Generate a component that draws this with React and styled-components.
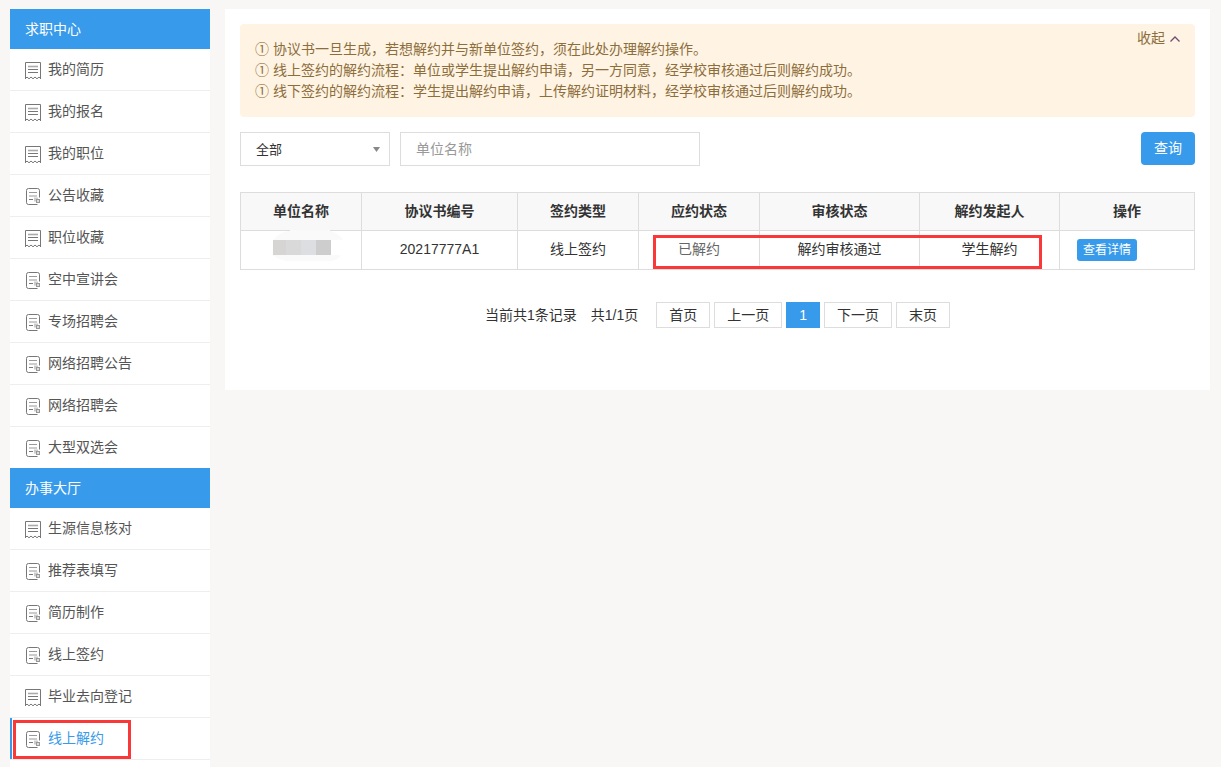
import React, { useState } from "react";
import styled, { createGlobalStyle } from "styled-components";

const jobMenu = [
  { label: "我的简历", icon: "receipt" },
  { label: "我的报名", icon: "receipt" },
  { label: "我的职位", icon: "receipt" },
  { label: "公告收藏", icon: "form" },
  { label: "职位收藏", icon: "receipt" },
  { label: "空中宣讲会", icon: "form" },
  { label: "专场招聘会", icon: "form" },
  { label: "网络招聘公告", icon: "form" },
  { label: "网络招聘会", icon: "form" },
  { label: "大型双选会", icon: "form" },
];

const serviceMenu = [
  { label: "生源信息核对", icon: "receipt" },
  { label: "推荐表填写", icon: "form" },
  { label: "简历制作", icon: "form" },
  { label: "线上签约", icon: "form" },
  { label: "毕业去向登记", icon: "receipt" },
  { label: "线上解约", icon: "form", active: true },
];

const notices = [
  "① 协议书一旦生成，若想解约并与新单位签约，须在此处办理解约操作。",
  "① 线上签约的解约流程：单位或学生提出解约申请，另一方同意，经学校审核通过后则解约成功。",
  "① 线下签约的解约流程：学生提出解约申请，上传解约证明材料，经学校审核通过后则解约成功。",
];

const columns = [
  { title: "单位名称", width: 121 },
  { title: "协议书编号", width: 156 },
  { title: "签约类型", width: 121 },
  { title: "应约状态", width: 121 },
  { title: "审核状态", width: 160 },
  { title: "解约发起人", width: 140 },
  { title: "操作", width: 135 },
];

const ReceiptIcon = () => (
  <Icon viewBox="0 0 16 18" aria-hidden="true">
    <path d="M.5 17V.5h15V17" stroke="#777" />
    <path
      d="M.5 16.500l1.500-1.500 2 1.800 2-1.800 2 1.800 2-1.800 2 1.800 2-1.800 1.500 1.500"
      stroke="#777"
    />
    <path d="M3 4.500h10" stroke="#aaa" strokeWidth="1.600" />
    <path d="M3 7.500h10M3 10.500h10" stroke="#777" />
  </Icon>
);

const FormIcon = () => (
  <Icon viewBox="0 0 16 18" aria-hidden="true">
    <path
      d="M14.500 9.500V2.500a2 2 0 0 0-2-2h-9a2 2 0 0 0-2 2v12a2 2 0 0 0 2 2h9"
      stroke="#777"
    />
    <path d="M4 4.500h8M4 8h8" stroke="#999" strokeWidth="1.200" />
    <path d="M4 11.500h4" stroke="#777" />
    <path d="M9 9.500h4v4H9z" fill="#ccc" />
    <rect x="11.500" y="11.500" width="3" height="3" fill="#ddd" stroke="#999" />
  </Icon>
);

const Menu = ({ title, items }) => (
  <nav aria-label={title}>
    <MenuTitle>{title}</MenuTitle>
    <MenuList>
      {items.map((item) => (
        <MenuItem key={item.label} $active={item.active}>
          <MenuLink href="#" $active={item.active}>
            {item.icon === "receipt" ? <ReceiptIcon /> : <FormIcon />}
            {item.label}
          </MenuLink>
          {item.active && <MenuMark />}
        </MenuItem>
      ))}
    </MenuList>
  </nav>
);

const App = () => {
  const [open, setOpen] = useState(true);

  return (
    <Page>
      <GlobalStyle />
      <Sidebar>
        <Menu title="求职中心" items={jobMenu} />
        <Menu title="办事大厅" items={serviceMenu} />
      </Sidebar>
      <Main>
        <Notice>
          <NoticeText>
            {notices.slice(0, open ? 3 : 1).map((text) => (
              <p key={text}>{text}</p>
            ))}
          </NoticeText>
          <Toggle type="button" onClick={() => setOpen(!open)}>
            收起
            <svg width="10" height="6" viewBox="0 0 10 6" aria-hidden="true">
              <path d="M.5 5.5L5 1l4.500 4.500" fill="none" stroke="#714c70" strokeWidth="1.300" />
            </svg>
          </Toggle>
        </Notice>
        <Filters onSubmit={(e) => e.preventDefault()}>
          <SelectBox>
            <Select aria-label="状态" defaultValue="all">
              <option value="all">全部</option>
            </Select>
            <Arrow viewBox="0 0 7 5" aria-hidden="true">
              <path d="M0 0h7L3.500 5z" fill="#888" />
            </Arrow>
          </SelectBox>
          <TextInput aria-label="单位名称" placeholder="单位名称" />
          <SearchButton type="submit">查询</SearchButton>
        </Filters>
        <TableBox>
          <Table>
            <colgroup>
              {columns.map((col) => (
                <Col key={col.title} $width={col.width} />
              ))}
            </colgroup>
            <thead>
              <tr>
                {columns.map((col) => (
                  <th key={col.title}>{col.title}</th>
                ))}
              </tr>
            </thead>
            <tbody>
              <tr>
                <td>
                  <Mosaic viewBox="0 0 70 32" aria-label="已隐藏">
                    <path d="M0 10Q8 1 17 1V0h40v1q9 2 13 9h-12v15h10q-4 6-12 6H18Q6 31 0 25z" fill="#fafafa" />
                    <path d="M0 10h13v15H0z" fill="#d6d5d4" />
                    <path d="M13 10h15v15H13z" fill="#dad9d9" />
                    <path d="M28 10h15v15H28z" fill="#dcdee1" />
                    <path d="M43 10h15v15H43z" fill="#cecdce" />
                  </Mosaic>
                </td>
                <td>20217777A1</td>
                <td>线上签约</td>
                <td>
                  <Muted>已解约</Muted>
                </td>
                <td>解约审核通过</td>
                <td>学生解约</td>
                <ActionCell>
                  <DetailButton type="button">查看详情</DetailButton>
                </ActionCell>
              </tr>
            </tbody>
          </Table>
          <RowMark />
        </TableBox>
        <Pager aria-label="分页">
          <Total>当前共1条记录</Total>
          <Pages>共1/1页</Pages>
          <PageLink href="#">首页</PageLink>
          <PageLink href="#">上一页</PageLink>
          <PageLink href="#" $current aria-current="page">
            1
          </PageLink>
          <PageLink href="#">下一页</PageLink>
          <PageLink href="#">末页</PageLink>
        </Pager>
      </Main>
    </Page>
  );
};

export default App;

const GlobalStyle = createGlobalStyle`
  * {
    box-sizing: border-box;
  }
  body {
    margin: 0;
    background: #f8f7f5;
    color: #333;
    font: 14px/21px "Liberation Sans", "Noto Sans CJK SC", sans-serif;
  }
  p, ul {
    margin: 0;
    padding: 0;
  }
  button, input, select {
    font: inherit;
  }
`;

const Page = styled.div`
  display: flex;
  gap: 15px;
  min-height: 100vh;
  padding: 9px 11px 0 10px;
`;

const Sidebar = styled.aside`
  flex: 0 0 200px;
  background: #fff;
`;

const MenuTitle = styled.h2`
  margin: 0;
  padding: 0 15px;
  background: #389aea;
  color: #fff;
  font-size: 14px;
  font-weight: 400;
  line-height: 40px;
`;

const MenuList = styled.ul`
  list-style: none;
`;

const MenuItem = styled.li`
  position: relative;
  border-bottom: 1px solid #eee;
  box-shadow: ${({ $active }) => ($active ? "inset 2px 0 #389aea" : "none")};

  nav:first-child &:last-child {
    border-bottom: 0;
  }
`;

const MenuLink = styled.a`
  display: flex;
  align-items: center;
  gap: 7px;
  height: 41px;
  padding: 0 15px;
  color: ${({ $active }) => ($active ? "#389aea" : "#555")};
  text-decoration: none;
`;

const Icon = styled.svg`
  width: 16px;
  height: 18px;
  margin-top: 3px;
  fill: none;
`;

const MenuMark = styled.span`
  position: absolute;
  top: 2px;
  bottom: 0;
  left: 3px;
  width: 118px;
  border: 3px solid #fb3838;
  pointer-events: none;
`;

const Main = styled.main`
  flex: 1;
  align-self: flex-start;
  min-width: 0;
  padding: 15px 15px 62px;
  background: #fff;
`;

const Notice = styled.section`
  display: flex;
  align-items: flex-start;
  justify-content: space-between;
  padding: 0 15px;
  border-radius: 4px;
  background: #fff4e3;
  color: #8c6d3c;
`;

const NoticeText = styled.div`
  padding: 15px 0;
`;

const Toggle = styled.button`
  display: flex;
  flex-shrink: 0;
  align-items: center;
  gap: 5px;
  padding: 4px 0 0;
  border: 0;
  background: none;
  color: inherit;
  cursor: pointer;
`;

const Filters = styled.form`
  display: flex;
  gap: 10px;
  margin: 15px 0 26px;
`;

const SelectBox = styled.div`
  position: relative;
  width: 150px;
`;

const Select = styled.select`
  width: 100%;
  height: 34px;
  padding: 0 15px;
  border: 1px solid #ddd;
  border-radius: 0;
  background: #fff;
  color: #333;
  font-size: 13px;
  appearance: none;
`;

const Arrow = styled.svg`
  position: absolute;
  top: 15px;
  right: 10px;
  width: 7px;
  height: 5px;
  pointer-events: none;
`;

const TextInput = styled.input`
  width: 300px;
  height: 34px;
  padding: 0 15px;
  border: 1px solid #ddd;

  &::placeholder {
    color: #999;
  }
`;

const SearchButton = styled.button`
  height: 33px;
  margin-left: auto;
  padding: 0 13px;
  border: 0;
  border-radius: 4px;
  background: #389aea;
  color: #fff;
  cursor: pointer;
`;

const TableBox = styled.div`
  position: relative;
`;

const Table = styled.table`
  width: 100%;
  border: solid #ddd;
  border-width: 1px 0 0 1px;
  border-spacing: 0;
  table-layout: fixed;
  text-align: center;

  th,
  td {
    height: 39px;
    padding: 0 0 1px;
    border: solid #ddd;
    border-width: 0 1px 1px 0;
  }
  th {
    height: 38px;
    padding: 0;
    background: #f8f8f8;
  }
`;

const Col = styled.col`
  width: ${({ $width }) => $width}px;
`;

const Mosaic = styled.svg`
  display: block;
  width: 70px;
  height: 32px;
  margin: -8px auto 0 32px;
`;

const Muted = styled.span`
  color: #666;
`;

const ActionCell = styled.td`
  text-align: left;
`;

const DetailButton = styled.button`
  display: block;
  height: 22px;
  margin-left: 17px;
  padding: 0 6px;
  border: 0;
  border-radius: 3px;
  background: #389aea;
  color: #fff;
  font-size: 12px;
  line-height: 22px;
  cursor: pointer;
`;

const RowMark = styled.span`
  position: absolute;
  right: 153px;
  bottom: 1px;
  left: 413px;
  height: 34px;
  border: 3px solid #fb3838;
  pointer-events: none;
`;

const Pager = styled.nav`
  display: flex;
  align-items: center;
  justify-content: center;
  gap: 4px;
  margin-top: 32px;
`;

const Total = styled.span`
  margin-right: 10px;
`;

const Pages = styled.span`
  margin-right: 14px;
`;

const PageLink = styled.a`
  padding: 0 12px;
  border: 1px solid ${({ $current }) => ($current ? "#389aea" : "#ddd")};
  background: ${({ $current }) => ($current ? "#389aea" : "#fff")};
  color: ${({ $current }) => ($current ? "#fff" : "#333")};
  line-height: 24px;
  text-decoration: none;
`;
